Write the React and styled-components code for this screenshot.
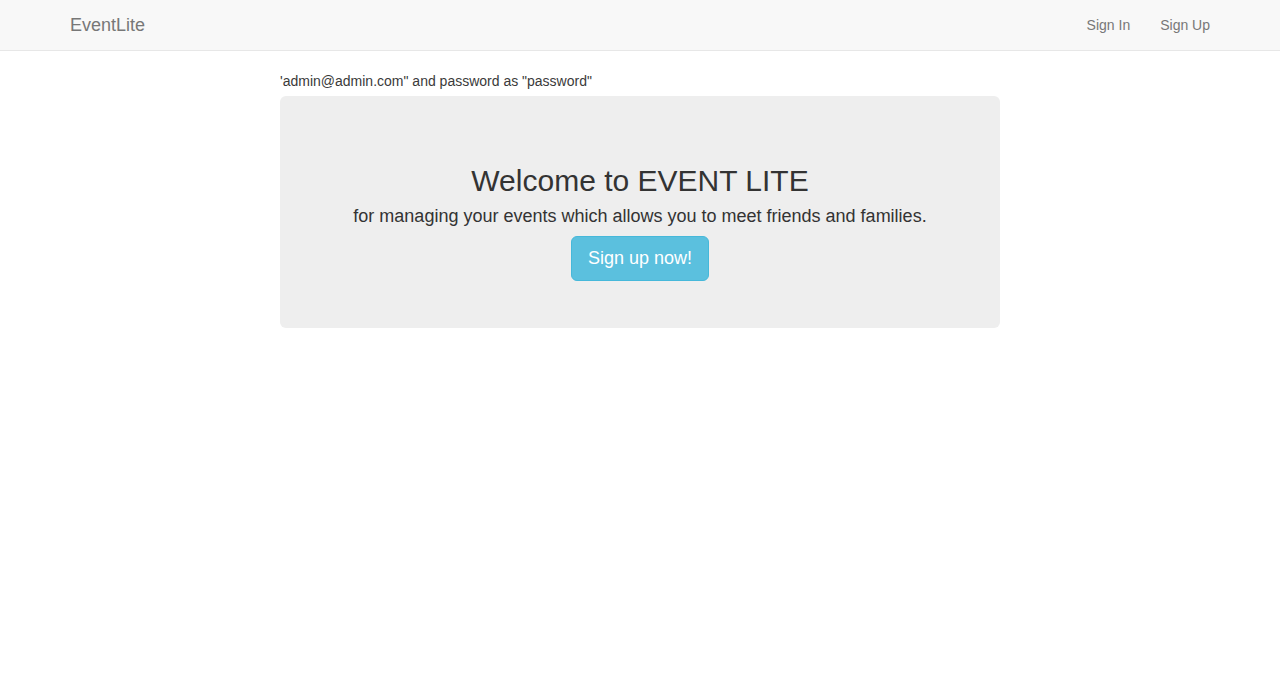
import React from "react";
import styled, { createGlobalStyle } from "styled-components";

const GlobalStyle = createGlobalStyle`
  * {
    box-sizing: border-box;
  }
  body {
    margin: 0;
    font-family: "Liberation Sans", Arial, Helvetica, sans-serif;
    font-size: 14px;
    line-height: 1.42857;
    color: #333;
    background: #fff;
  }
`;

const Navbar = styled.nav`
  height: 51px;
  background: #f8f8f8;
  border-bottom: 1px solid #e7e7e7;
  margin-bottom: 20px;
`;

const NavContainer = styled.div`
  width: 1170px;
  margin: 0 auto;
  display: flex;
  justify-content: space-between;
  align-items: center;
`;

const Brand = styled.a`
  font-size: 18px;
  line-height: 20px;
  padding: 15px;
  color: #777;
  text-decoration: none;
`;

const NavLinks = styled.ul`
  list-style: none;
  margin: 0;
  padding: 0;
  display: flex;
`;

const NavLink = styled.a`
  display: block;
  padding: 15px;
  line-height: 20px;
  color: #777;
  text-decoration: none;
`;

const Main = styled.main`
  width: 720px;
  margin: 0 auto;
  display: flex;
  flex-direction: column;
  gap: 5px;
`;

const Notice = styled.div`
  line-height: 20px;
  color: #3a3a3a;
`;

const Jumbotron = styled.section`
  background: #eee;
  border-radius: 6px;
  padding: 68px 30px 47px;
  display: flex;
  flex-direction: column;
  align-items: center;
  text-align: center;
`;

const Heading = styled.h2`
  margin: 0 0 9px;
  font-size: 30px;
  font-weight: 500;
  line-height: 33px;
  color: #333;
`;

const Lead = styled.h4`
  margin: 0 0 10px;
  font-size: 18px;
  font-weight: 500;
  line-height: 20px;
  color: #333;
`;

const Button = styled.a`
  display: inline-block;
  padding: 10px 16px;
  font-size: 18px;
  line-height: 23px;
  border-radius: 6px;
  color: #fff;
  background: #5bc0de;
  border: 1px solid #46b8da;
  text-decoration: none;
`;

export default function App() {
  return (
    <>
      <GlobalStyle />
      <Navbar>
        <NavContainer>
          <Brand href="#">EventLite</Brand>
          <NavLinks>
            <li>
              <NavLink href="#">Sign In</NavLink>
            </li>
            <li>
              <NavLink href="#">Sign Up</NavLink>
            </li>
          </NavLinks>
        </NavContainer>
      </Navbar>
      <Main>
        <Notice>'admin@admin.com" and password as "password"</Notice>
        <Jumbotron>
          <Heading>Welcome to EVENT LITE</Heading>
          <Lead>for managing your events which allows you to meet friends and families.</Lead>
          <Button href="#">Sign up now!</Button>
        </Jumbotron>
      </Main>
    </>
  );
}
